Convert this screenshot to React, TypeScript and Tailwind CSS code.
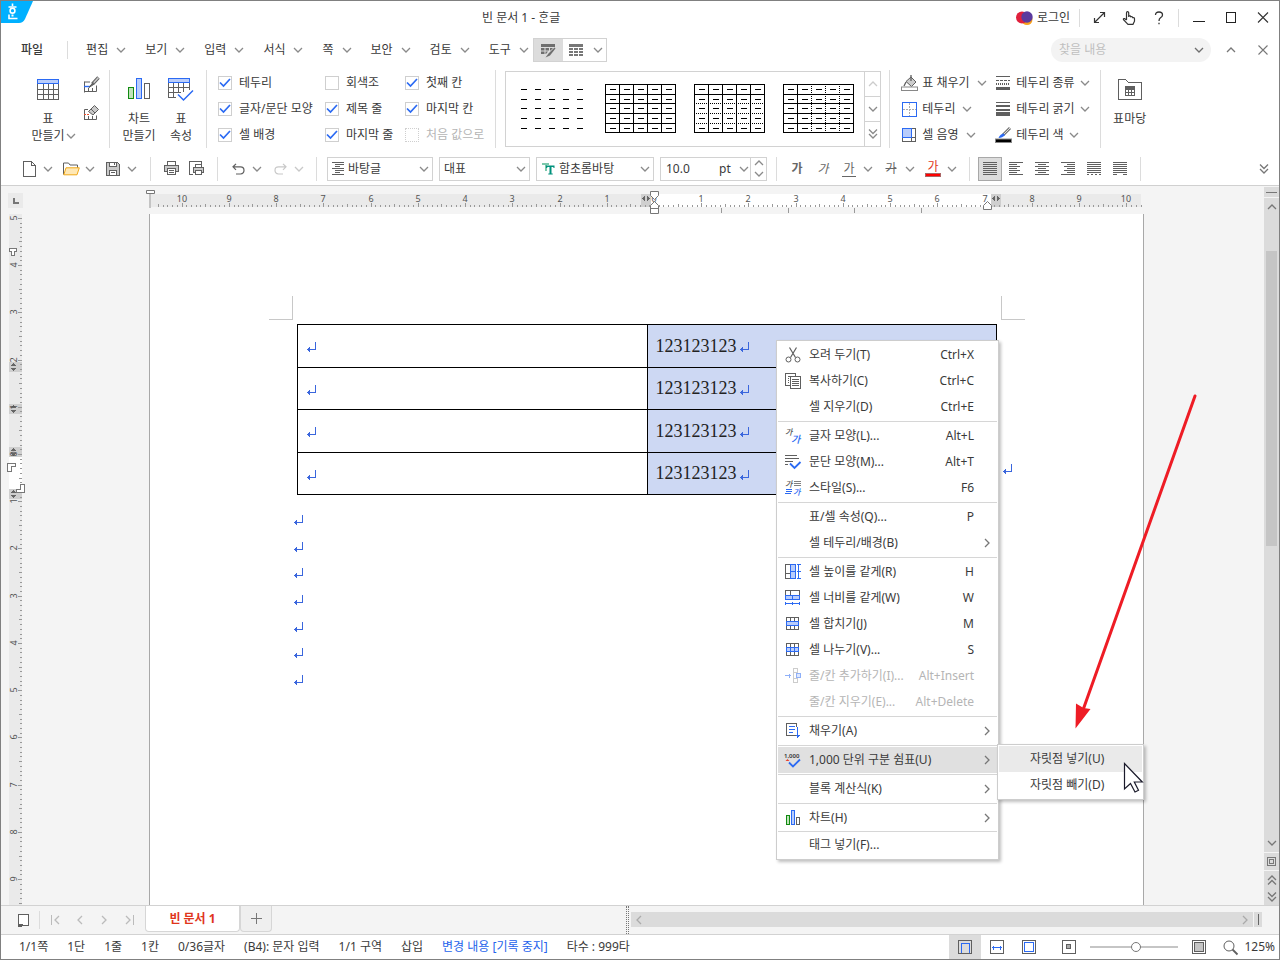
import React from 'react';
import type { ReactNode } from 'react';

const G = '#5f5f5f';
const B = '#2b6af3';
const LB = '#b9cdfb';

type SvgProps = { w: number; h: number; children: ReactNode; soft?: boolean };

function Svg({ w, h, children, soft }: SvgProps) {
  return (
    <svg width={w} height={h} viewBox={`0 0 ${w} ${h}`} fill="none" stroke={G} shapeRendering={soft ? 'auto' : 'crispEdges'} className="shrink-0 overflow-visible" aria-hidden="true">
      {children}
    </svg>
  );
}

type Dir = 'down' | 'up' | 'left' | 'right';
const chevPaths: Record<Dir, string> = {
  down: 'M1 3l4 4 4-4',
  up: 'M1 7l4-4 4 4',
  left: 'M7 1L3 5l4 4',
  right: 'M3 1l4 4-4 4',
};

function Chev({ dir = 'down', color = '#8a8a8a', size = 10 }: { dir?: Dir; color?: string; size?: number }) {
  return (
    <svg width={size} height={size} viewBox="0 0 10 10" fill="none" stroke={color} strokeWidth={1.3} className="shrink-0" aria-hidden="true">
      <path d={chevPaths[dir]} />
    </svg>
  );
}

function DoubleChev({ up = false, color = '#777' }: { up?: boolean; color?: string }) {
  return (
    <Svg w={10} h={12} soft>
      <path d={up ? 'M1 6l4-4 4 4M1 10.5l4-4 4 4' : 'M1 1.5l4 4 4-4M1 6l4 4 4-4'} stroke={color} strokeWidth={1.3} />
    </Svg>
  );
}

function Divider({ className = 'h-6' }: { className?: string }) {
  return <div className={`w-px shrink-0 bg-[#dcdcdc] ${className}`} />;
}

/* ---------- title bar ---------- */

function TitleBar() {
  return (
    <header className="flex h-[33px] shrink-0 items-center">
      <svg width="32" height="32" viewBox="0 0 32 32" className="shrink-0 self-start" aria-label="한글">
        <path d="M0 0h32l-8 18q-2 4-6 4H0z" fill="#00b0ff" />
        <g stroke="#fff" fill="none" strokeWidth="1.600">
          <path d="M11.500 2.500v2.500M7.500 6h8M8 13.500v4h8.500" />
          <circle cx="11.500" cy="9.700" r="2.400" />
          <path d="M11.500 13.500v2" strokeWidth="2" />
        </g>
      </svg>
      <h1 className="flex-1 pl-[449px] text-xs">빈 문서 1 - ᄒᆞᆫ글</h1>
      <button className="flex items-center gap-1 pr-[9px]">
        <svg width="17" height="14" viewBox="0 0 17 14" aria-hidden="true">
          <circle cx="11" cy="8.500" r="5.500" fill="#f9a11b" />
          <circle cx="6" cy="6.500" r="6" fill="#e0203c" />
          <circle cx="11" cy="6" r="5.700" fill="#5b3a9e" />
        </svg>
        로그인
      </button>
      <Divider className="h-[18px]" />
      <div className="flex items-center pl-1">
        <button aria-label="전체 화면" className="flex w-[30px] justify-center">
          <Svg w={13} h={13} soft>
            <path d="M2 11L11 2M7 1.500h4.500V6M1.500 7v4.500H6" stroke="#333" strokeWidth={1.200} />
          </Svg>
        </button>
        <button aria-label="터치 모드" className="flex w-[30px] justify-center">
          <Svg w={14} h={14} soft>
            <path d="M4.500 9V2q0-1.300 1.100-1.300T6.700 2v4M6.700 6V5q1.800-.6 2 .8 1.800-.6 2 .8 1.800-.2 1.800 1.200v2.400L11 13.300H6L1.500 8.700Q1 7.300 2.500 7.500l2 1.500" stroke="#333" strokeWidth={1.200} />
          </Svg>
        </button>
        <button aria-label="도움말" className="flex w-[30px] justify-center">
          <Svg w={10} h={14} soft>
            <path d="M1.500 4Q1.500 1 5 1t3.500 3Q8.500 5.500 6.500 6.800 5 7.800 5 10M5 11.800v1.500" stroke="#333" strokeWidth={1.300} />
          </Svg>
        </button>
      </div>
      <div className="w-1" />
      <Divider className="h-[18px]" />
      <div className="flex items-center pl-1">
        <button aria-label="최소화" className="flex w-8 justify-center">
          <Svg w={12} h={12}><path d="M0 9.500h12" stroke="#222" /></Svg>
        </button>
        <button aria-label="최대화" className="flex w-8 justify-center">
          <Svg w={12} h={12}><rect x="1" y=".5" width="9.500" height="9.500" stroke="#222" /></Svg>
        </button>
        <button aria-label="닫기" className="flex w-8 justify-center">
          <Svg w={12} h={12} soft><path d="M1 0.500l10 10M11 .5L1 10.500" stroke="#333" strokeWidth={1.100} /></Svg>
        </button>
      </div>
    </header>
  );
}

/* ---------- menu bar ---------- */

const menus = ['편집', '보기', '입력', '서식', '쪽', '보안', '검토', '도구'];

function MenuBar() {
  return (
    <nav className="flex h-8 shrink-0 items-center">
      <button className="pl-5 font-medium">파일</button>
      <div className="w-6" />
      <Divider className="h-[18px]" />
      <div className="flex gap-[19px] pr-1 pl-[18px]">
        {menus.map((m) => (
          <button key={m} className="flex items-center gap-2">
            {m}
            <Chev />
          </button>
        ))}
      </div>
      <div className="flex h-6 border border-[#d2d2d2]">
        <button aria-label="표 디자인" className="flex w-[29px] items-center justify-center bg-[#dcdcdc]">
          <Svg w={16} h={15} soft>
            <g fill="#6e6e6e" stroke="none">
              <path d="M1 1h14v3H1zM1 5h3.500v2.500H1zM5.500 5H9v2.500H5.500zM10 5h3l-2.500 2.500H10zM1 8.500h3.500V11H1zM5.500 8.500H8L6 11h-.5z" />
              <path d="M14.500 4.500L8.500 10.500l-3 4 4.500-2 5.500-7z" />
            </g>
          </Svg>
        </button>
        <button aria-label="표 레이아웃" className="flex w-[43px] items-center justify-between pr-[3px] pl-[6px]">
          <Svg w={14} h={13}>
            <path d="M0 0h14v3H0zM0 4h4v2H0zM5 4h4v2H5zM10 4h4v2h-4zM0 7h4v2H0zM5 7h4v2H5zM10 7h4v2h-4zM0 10h4v2H0zM5 10h4v2H5zM10 10h4v2h-4z" fill="#777" stroke="none" />
          </Svg>
          <Chev />
        </button>
      </div>
      <div className="flex-1" />
      <label className="flex h-6 w-40 items-center rounded-full bg-[#f3f3f3] pr-[7px] pl-2">
        <input aria-label="찾을 내용" placeholder="찾을 내용" className="min-w-0 flex-1 bg-transparent outline-none placeholder:text-[#bfbfbf]" />
        <Chev color="#6e6e6e" />
      </label>
      <div className="w-1" />
      <button aria-label="접기" className="flex w-8 justify-center"><Chev dir="up" color="#777" /></button>
      <button aria-label="문서 닫기" className="flex w-8 justify-center">
        <Svg w={10} h={10} soft><path d="M.5.500l9 9M9.500.500l-9 9" stroke="#777" strokeWidth={1.100} /></Svg>
      </button>
    </nav>
  );
}

/* ---------- ribbon ---------- */

const checks: { label: string; on: boolean; off?: boolean }[] = [
  { label: '테두리', on: true },
  { label: '회색조', on: false },
  { label: '첫째 칸', on: true },
  { label: '글자/문단 모양', on: true },
  { label: '제목 줄', on: true },
  { label: '마지막 칸', on: true },
  { label: '셀 배경', on: true },
  { label: '마지막 줄', on: true },
  { label: '처음 값으로', on: false, off: true },
];

function Check({ label, on, off }: { label: string; on: boolean; off?: boolean }) {
  return (
    <label className={`flex items-center gap-[7px] ${off ? 'text-[#b5b5b5]' : ''}`}>
      <span className="grid size-[14px] shrink-0 place-items-center">
        <input
          type="checkbox"
          defaultChecked={on}
          disabled={off}
          className="peer col-start-1 row-start-1 size-[14px] appearance-none border border-[#cfcfcf] bg-white disabled:border-dotted"
        />
        <svg width="12" height="12" viewBox="0 0 12 12" fill="none" stroke={B} strokeWidth="1.700" className="pointer-events-none invisible col-start-1 row-start-1 peer-checked:visible" aria-hidden="true">
          <path d="M1 5.500l3.500 3.500L11 2" />
        </svg>
      </span>
      {label}
    </label>
  );
}

const gx = [0, 14, 28, 42, 56, 70];
const gy = [0, 10, 19, 29, 39, 48];

function Thumb({ kind }: { kind: 'none' | 'full' | 'rows' | 'cols' }) {
  return (
    <svg width="71" height="50" viewBox="0 0 71 50" stroke="#000" shapeRendering="crispEdges" aria-hidden="true">
      {gy.slice(0, 5).map((y) =>
        gx.slice(0, 5).map((x) => <path key={`${x}-${y}`} d={`M${x + 5} ${y + 5.5}h6`} />),
      )}
      {kind !== 'none' && (
        <>
          {gx.map((x, i) => (
            <path key={x} d={`M${x + 0.5} 0V49`} strokeDasharray={kind === 'cols' && i > 1 && i < 5 ? '1 1' : undefined} />
          ))}
          {gy.map((y, i) => (
            <path key={y} d={`M0 ${y + 0.5}H70`} strokeDasharray={kind === 'rows' && i > 1 && i < 5 ? '1 1' : undefined} />
          ))}
        </>
      )}
    </svg>
  );
}

function Tool({ icon, label, w }: { icon: ReactNode; label: string; w?: boolean }) {
  return (
    <button className="flex items-center gap-[5px]">
      <span className="flex w-4 justify-center">{icon}</span>
      {label}
      <span className={w ? 'pl-0.5' : ''}><Chev /></span>
    </button>
  );
}

const brush = (
  <>
    <path d="M15 1L8 8" stroke="#777" strokeWidth={3} />
    <path d="M15 1L9 7" stroke="#ddd" strokeWidth={1} />
    <path d="M8.500 6.500Q5 7 3.500 11q4 0 6.500-3z" fill={B} stroke="none" />
  </>
);

const bigLabel = 'mt-[10px] text-center leading-[17px]';

function Ribbon() {
  return (
    <section className="flex h-[86px] shrink-0 pt-1 pb-1">
      <div className="flex pl-[30px]">
        <button className="flex w-[34px] flex-col items-center whitespace-nowrap pt-[9px]">
          <Svg w={22} h={21}>
            <path d="M.5 5v15.500h21V5M.5 10.500h21M.5 15.500h21M6.500 5v15M11.500 5v15M16.500 5v15" />
            <rect x=".5" y=".5" width="21" height="4" fill={LB} stroke={B} />
          </Svg>
          <span className={bigLabel}>표<br />만들기</span>
        </button>
        <div className="flex items-end pb-[7px] pl-px"><Chev /></div>
        <div className="flex flex-col justify-start gap-[11px] pt-[6px] pr-[9px] pl-[7px]">
          <button aria-label="표 그리기">
            <Svg w={17} h={17} soft>
              <path d="M1.500 5.500v11M1.500 15.500h12v-6M1.500 6H7M5.500 12v3M9.500 12v3" />
              <path d="M1 10.500h6" stroke={B} strokeWidth={1.400} />
              <path d="M15.500 1.500L9.500 8" stroke={G} strokeWidth={3.400} />
              <path d="M15.500 1.500L9.500 8" stroke="#ccc" strokeWidth={1.500} />
              <path d="M10 6.500L6 11.500l4.500-3z" fill={G} />
            </Svg>
          </button>
          <button aria-label="표 지우개">
            <Svg w={17} h={17} soft>
              <path d="M1.500 5.500v10.500M1.500 15.500h12v-4M1.500 5.500H5M5.500 12v3M9.500 12v3" />
              <path d="M1 10.500h5" stroke="#e8502f" strokeDasharray="2 1" />
              <path d="M11.500 1.500l4 4-5.500 5.500-4.500-3.500z" fill="#c9c9c9" />
              <path d="M8 5l4 4" />
            </Svg>
          </button>
        </div>
      </div>
      <Divider className="h-[78px]" />
      <div className="flex gap-2 pr-2 pl-3">
        <button className="flex w-[34px] flex-col items-center whitespace-nowrap pt-2">
          <Svg w={22} h={22}>
            <rect x=".5" y="9.500" width="5" height="11" fill="#bfe3b9" stroke="#118a11" />
            <rect x="8.500" y=".5" width="5" height="20" fill={LB} stroke={B} />
            <rect x="16.500" y="5.500" width="5" height="15" />
          </Svg>
          <span className={bigLabel}>차트<br />만들기</span>
        </button>
        <button className="flex w-[34px] flex-col items-center whitespace-nowrap pt-2">
          <svg width="26" height="24" viewBox="0 0 26 24" fill="none" stroke={G} aria-hidden="true" className="-mb-0.5">
            <g shapeRendering="crispEdges">
              <path d="M.5 5v14.500H8M.5 9.500h21M.5 14.500h12M5.500 5v14M10.500 5v10M15.500 5v9M21.500 5v7" />
              <rect x=".5" y=".5" width="21" height="4" fill={LB} stroke={B} />
            </g>
            <path d="M10 16.500l5.500 5.500L25 12.500" stroke={B} strokeWidth="1.500" />
          </svg>
          <span className={bigLabel}>표<br />속성</span>
        </button>
      </div>
      <Divider className="h-[78px]" />
      <div className="grid grid-cols-[107px_80px_auto] grid-rows-[26px_26px_26px] px-[11px] whitespace-nowrap">
        {checks.map((c) => (
          <Check key={c.label} {...c} />
        ))}
      </div>
      <Divider className="h-[78px]" />
      <div className="mt-px mr-2 ml-[9px] flex h-[76px] border border-[#d2d2d2]">
        <div className="flex items-center gap-[18px] px-[10px]">
          <Thumb kind="none" />
          <Thumb kind="full" />
          <Thumb kind="rows" />
          <Thumb kind="cols" />
        </div>
        <div className="flex w-4 flex-col divide-y divide-[#d2d2d2] border-l border-[#d2d2d2]">
          <button aria-label="위로" className="flex flex-1 items-center justify-center"><Chev dir="up" color="#ccc" /></button>
          <button aria-label="아래로" className="flex flex-1 items-center justify-center"><Chev /></button>
          <button aria-label="자세히" className="flex flex-1 items-center justify-center"><DoubleChev color="#8a8a8a" /></button>
        </div>
      </div>
      <Divider className="h-[78px]" />
      <div className="grid grid-cols-[94px_auto] grid-rows-[26px_26px_26px] pr-[10px] pl-[11px] whitespace-nowrap">
        <Tool w label="표 채우기" icon={
          <Svg w={17} h={16} soft>
            <path d="M5 6.500L10 2l5 5-4.500 4.500z" fill="#ccc" />
            <path d="M10 0v6M5 7L3 11" strokeWidth={1.300} />
            <rect x=".5" y="12" width="16" height="3.500" fill="#fff" stroke="#888" />
          </Svg>
        } />
        <Tool label="테두리 종류" icon={
          <Svg w={14} h={14}>
            <path d="M0 .5h14" /><path d="M0 4.500h14" strokeDasharray="3 1" /><path d="M0 8h14" strokeWidth={2} strokeDasharray="1 1" /><path d="M0 12.500h14" strokeWidth={3} />
          </Svg>
        } />
        <Tool w label="테두리" icon={
          <Svg w={15} h={15}>
            <path d="M7.500 1v13M1 7.500h13" stroke="#aaa" strokeDasharray="2 1" />
            <rect x=".5" y=".5" width="14" height="14" stroke={B} />
          </Svg>
        } />
        <Tool label="테두리 굵기" icon={
          <Svg w={14} h={14}>
            <path d="M0 .5h14" /><path d="M0 4h14" strokeWidth={2} /><path d="M0 8h14" strokeWidth={2} /><path d="M0 12h14" strokeWidth={4} />
          </Svg>
        } />
        <Tool w label="셀 음영" icon={
          <Svg w={14} h={14}>
            <rect x=".5" y=".5" width="13" height="13" /><path d="M9.500 9v5M9 9.500h5" />
            <rect x=".5" y=".5" width="9" height="9" fill={LB} stroke={B} />
          </Svg>
        } />
        <Tool label="테두리 색" icon={
          <Svg w={17} h={16} soft>
            {brush}
            <rect x=".5" y="12" width="16" height="3.500" fill="#000" stroke="#888" />
          </Svg>
        } />
      </div>
      <Divider className="h-[78px]" />
      <button className="flex w-[58px] flex-col items-center pt-[9px]">
        <Svg w={24} h={21}>
          <path d="M.5 20.500V.5h7l3 3h13v17z" />
          <path d="M7.500 7.500h9v9h-9zM7.500 10.500h9M7.500 13.500h9M10.500 10v6M13.500 10v6" /><path d="M7 8.500h10" strokeWidth={2} />
        </Svg>
        <span className={bigLabel}>표마당</span>
      </button>
    </section>
  );
}

/* ---------- format bar ---------- */

function Pair({ label, children, faded }: { label: string; children: ReactNode; faded?: boolean }) {
  return (
    <div className="flex items-center">
      <button aria-label={label} className="flex w-[22px] items-center justify-center">{children}</button>
      <button aria-label={`${label} 옵션`} className="flex w-4 justify-center"><Chev color={faded ? '#c8c8c8' : undefined} /></button>
    </div>
  );
}

function Combo({ label, value, className, icon }: { label: string; value: string; className: string; icon?: ReactNode }) {
  return (
    <label className={`flex h-6 shrink-0 items-center gap-[3px] border border-[#d2d2d2] pr-[3px] pl-1 ${className}`}>
      {icon}
      <select aria-label={label} className="min-w-0 flex-1 appearance-none bg-transparent outline-none">
        <option>{value}</option>
      </select>
      <Chev />
    </label>
  );
}

type AlignKind = 'justify' | 'left' | 'center' | 'right' | 'spread' | 'divide';
const aligns: { kind: AlignKind; label: string }[] = [
  { kind: 'justify', label: '양쪽 정렬' },
  { kind: 'left', label: '왼쪽 정렬' },
  { kind: 'center', label: '가운데 정렬' },
  { kind: 'right', label: '오른쪽 정렬' },
  { kind: 'spread', label: '배분 정렬' },
  { kind: 'divide', label: '나눔 정렬' },
];

function AlignIcon({ kind }: { kind: AlignKind }) {
  const rows = [0, 1, 2, 3, 4, 5, 6];
  return (
    <Svg w={14} h={13}>
      {rows.map((r) => {
        const y = r * 2 + 0.5;
        const even = r % 2 === 0;
        let d = `M0 ${y}h14`;
        if (kind === 'left') d = `M0 ${y}h${even ? (r === 2 || r === 4 ? 11 : 14) : 8}`;
        if (kind === 'center') d = even ? `M0 ${y}h14` : `M3 ${y}h8`;
        if (kind === 'right') d = even ? (r === 2 || r === 4 ? `M3 ${y}h11` : `M0 ${y}h14`) : `M6 ${y}h8`;
        if (kind === 'spread' && r === 6) d = `M0 ${y}h2M4 ${y}h2M8 ${y}h2M12 ${y}h2`;
        if (kind === 'divide' && r === 6) d = `M0 ${y}h4M10 ${y}h4`;
        return <path key={r} d={d} />;
      })}
    </Svg>
  );
}

function FormatBar() {
  return (
    <section className="flex h-[33px] shrink-0 items-center">
      <div className="flex gap-1 pr-[10px] pl-[17px]">
        <Pair label="새 문서">
          <Svg w={13} h={16}><path d="M.5.500h8l4 4v11H.5zM8.500.500v4h4" /></Svg>
        </Pair>
        <Pair label="열기">
          <Svg w={17} h={14} soft>
            <path d="M.5 12.500V1h5l1.500 2h7.500v3" />
            <path d="M3 5.800h13.300L14 12.800H.8z" fill="#ffe8b5" stroke="#f0a818" />
          </Svg>
        </Pair>
        <Pair label="저장">
          <Svg w={14} h={14}>
            <path d="M.5.500h11l2 2v11H.5z" fill="#c9c9c9" />
            <path d="M3.500.500h7v4h-7zM3.500 8.500h7v5h-7z" fill="#fff" />
            <path d="M5 10.500h4M8.500 1v2" />
          </Svg>
        </Pair>
      </div>
      <Divider />
      <div className="flex px-[7px]">
        <button aria-label="인쇄" className="flex w-[26px] justify-center">
          <Svg w={15} h={14}>
            <path d="M3.500 4V.5h8V4" /><path d="M.5 4.500h14v6H.5z" fill="#c9c9c9" /><path d="M3.500 7.500h8v6h-8z" fill="#fff" /><path d="M5 9.500h5M5 11.500h5" />
          </Svg>
        </button>
        <button aria-label="미리 보기" className="flex w-[26px] justify-center">
          <Svg w={16} h={15}>
            <path d="M4 13.500H.5V.500h12V3" /><path d="M6.500 6.500v-3h6v3" /><path d="M4.500 6.500h10v5h-10z" fill="#c9c9c9" /><path d="M6.500 9.500h6v4h-6z" fill="#fff" />
          </Svg>
        </button>
      </div>
      <Divider />
      <div className="flex gap-1 px-[9px]">
        <Pair label="되돌리기">
          <Svg w={13} h={12} soft><path d="M4 .8L1 3.800l3 3M1 3.800h7.500q3.500 0 3.500 3.500T8.500 11H4" strokeWidth={1.200} /></Svg>
        </Pair>
        <Pair label="다시 실행" faded>
          <Svg w={13} h={12} soft><path d="M9 .8l3 3-3 3M12 3.800H4.500Q1 3.800 1 7.300T4.500 11H9" stroke="#c8c8c8" strokeWidth={1.200} /></Svg>
        </Pair>
      </div>
      <Divider />
      <div className="flex gap-[6px] pr-[9px] pl-[10px]">
        <Combo label="스타일" value="바탕글" className="w-[106px]" icon={
          <Svg w={13} h={13}><path d="M0 .5h12M3 2.500h9M3 4.500h5M0 6.500h12M3 8.500h9M3 10.500h5M0 12.500h12" /></Svg>
        } />
        <Combo label="언어" value="대표" className="w-[91px]" />
        <Combo label="글꼴" value="함초롬바탕" className="w-[118px]" icon={
          <svg width="15" height="14" viewBox="0 0 15 14" aria-hidden="true" className="shrink-0">
            <path d="M1 1h7v2H6v6H4V3H1z" fill="#7cc8ac" />
            <path d="M5 3.500h8.500V6h-.8l-.6-1H10.500v6.500h1.200v1H7.300v-1h1.200V5H6.600L6 6H5z" fill="#00917c" />
          </svg>
        } />
        <div className="flex h-6 w-[107px] items-center border border-[#d2d2d2] pl-[5px]">
          <input aria-label="글자 크기" defaultValue="10.0" className="w-[53px] min-w-0 bg-transparent outline-none" />
          <select aria-label="단위" className="w-[18px] appearance-none bg-transparent outline-none"><option>pt</option></select>
          <span className="flex flex-1 justify-center"><Chev /></span>
          <div className="flex h-full w-4 flex-col items-center justify-between border-l border-[#d2d2d2] pb-px">
            <button aria-label="크게"><Chev dir="up" /></button>
            <button aria-label="작게"><Chev /></button>
          </div>
        </div>
      </div>
      <Divider />
      <div className="flex items-center pr-[9px] pl-[7px]">
        <button className="w-[26px] font-bold text-[#666]">가</button>
        <button className="w-[26px] text-[#666] italic">가</button>
        <div className="flex items-center gap-1 pl-0.5">
          <Pair label="밑줄"><span className="border-b border-[#666] px-px leading-[15px] text-[#666]">가</span></Pair>
          <Pair label="취소선"><span className="text-[#666] line-through">가</span></Pair>
          <Pair label="글자 색">
            <span className="flex flex-col items-center text-[#e0351c]">
              <span className="leading-3">가</span>
              <span className="h-1 w-4 border border-[#a66] bg-[#ff0000]" />
            </span>
          </Pair>
        </div>
      </div>
      <Divider />
      <div className="flex gap-0.5 px-2">
        {aligns.map(({ kind, label }, i) => (
          <button key={kind} aria-label={label} className={`flex size-6 items-center justify-center ${i === 0 ? 'border border-[#a8a8a8] bg-[#dcdcdc]' : ''}`}>
            <AlignIcon kind={kind} />
          </button>
        ))}
      </div>
      <Divider />
      <div className="flex-1" />
      <button aria-label="도구 더 보기" className="pr-[10px]"><DoubleChev /></button>
    </section>
  );
}

/* ---------- rulers ---------- */

const UNIT = 4.724;

function HorizontalRuler() {
  const ticks = Array.from({ length: 209 }, (_, k) => k - 105);
  return (
    <svg className="block h-7 w-full shrink-0" aria-hidden="true" shapeRendering="crispEdges">
      <g transform="translate(-23 -186)">
        <rect x="150" y="194" width="991" height="13" fill="#eaeaea" />
        <rect x="650" y="194" width="341" height="13" fill="#fff" />
        <rect x="641" y="194" width="10" height="13" fill="#cfcfcf" />
        <rect x="991" y="194" width="10" height="13" fill="#cfcfcf" />
        <rect x="149" y="194" width="2" height="14" fill="#c4c4c4" />
        {ticks.map((i) => {
          const x = Math.round(654 + i * UNIT);
          const len = i % 10 === 0 ? 4 : i % 5 === 0 ? 3 : 2;
          return <rect key={i} x={x} y={207 - len} width="1" height={len} fill="#999" />;
        })}
        {[721, 788, 854, 921].map((x) => (
          <rect key={x} x={x} y="208" width="1" height="5" fill="#999" />
        ))}
        <g fontSize="9" fill="#555" textAnchor="middle">
          {Array.from({ length: 21 }, (_, k) => k - 10).map((n) => (
            <text key={n} x={Math.round(654 + n * UNIT * 10)} y="202">{Math.abs(n)}</text>
          ))}
        </g>
        <path d="M645 196v5l-3-2.500zM647 196v5l3-2.500zM995 196v5l-3-2.500zM997 196v5l3-2.500z" fill="#666" />
        <g fill="#fff" stroke="#777" shapeRendering="auto">
          <path d="M146.500 190.500h8v3h-8zM650.500 191.500h8v4l-4 4-4-4zM650.500 213.500v-8l4-4 4 4v8zM650.500 208.500h8M983.500 209.500v-4l4-4 4 4v4z" />
        </g>
      </g>
    </svg>
  );
}

function VerticalRuler() {
  const ticks = Array.from({ length: 146 }, (_, k) => k - 50);
  return (
    <svg className="block min-h-0 w-6 flex-1" aria-hidden="true" shapeRendering="crispEdges">
      <g transform="translate(-1 -186)">
        <rect x="8" y="193" width="15" height="15" fill="#eaeaea" />
        <path d="M13.500 198v5h5" stroke="#777" strokeWidth="2" fill="none" />
        <rect x="9" y="214" width="13" height="691" fill="#eaeaea" />
        <rect x="9" y="457" width="13" height="33" fill="#fff" />
        {[362, 404, 447, 489].map((y) => (
          <g key={y}>
            <rect x="9" y={y} width="13" height="10" fill="#cfcfcf" />
            <path d={`M10.500 ${y + 4}h6l-3-3zM10.500 ${y + 6}h6l-3 3z`} fill="#666" />
          </g>
        ))}
        {ticks.map((i) => {
          const y = Math.round(454 + i * UNIT);
          const len = i % 10 === 0 ? 4 : i % 5 === 0 ? 3 : 2;
          return <rect key={i} x={22 - len} y={y} width={len} height="1" fill="#999" />;
        })}
        <g fontSize="9" fill="#555" textAnchor="middle">
          {Array.from({ length: 15 }, (_, k) => k - 5).map((n) => (
            <text key={n} transform={`translate(17 ${Math.round(454 + n * UNIT * 10)}) rotate(-90)`}>{Math.abs(n)}</text>
          ))}
        </g>
        <g fill="#fff" stroke="#777">
          <path d="M9.500 248.500h7v3h-2v4h-3v-4h-2zM7.500 463.500h8v3h-4v5h-4zM24.500 484.500v8h-8v-3h4v-5z" />
        </g>
      </g>
    </svg>
  );
}

/* ---------- document ---------- */

function ParaMark() {
  return (
    <svg width="10" height="11" viewBox="0 0 10 11" fill="#3a66dd" shapeRendering="crispEdges" className="inline-block shrink-0" aria-hidden="true">
      <path d="M8 0h1v8H0V7h1V6h1V5h1v2h5zM1 8h2v2H2V9H1z" />
    </svg>
  );
}

function Doc() {
  return (
    <article className="relative min-h-[691px] w-[995px] flex-1 border-x border-[#a8a8a8] bg-white">
      <div className="flex justify-between pt-[82px] pr-[118px] pl-[119px]">
        <div className="size-6 border-r border-b border-[#c8c8c8]" />
        <div className="size-6 border-b border-l border-[#c8c8c8]" />
      </div>
      <div className="flex items-end pt-1 pl-[147px]">
        <table className="h-[171px] w-[700px] table-fixed border-collapse">
          <tbody>
            {[0, 1, 2, 3].map((r) => (
              <tr key={r}>
                <td className="border border-black px-[9px] align-middle"><span className="flex pt-1"><ParaMark /></span></td>
                <td className="border border-black bg-[#cdd8f3] px-2 align-middle">
                  <span className="flex items-center gap-[3px] font-[Liberation_Serif,serif] text-lg leading-6 text-[#222]">
                    123123123
                    <span className="flex pt-1"><ParaMark /></span>
                  </span>
                </td>
              </tr>
            ))}
          </tbody>
        </table>
        <div className="pb-[18px] pl-[6px]"><ParaMark /></div>
      </div>
      <div className="mt-3 flex h-[187px] flex-col pl-36">
        {[0, 1, 2, 3, 4, 5, 6].map((p) => (
          <p key={p} className="flex flex-1 items-center"><ParaMark /></p>
        ))}
      </div>
      <ContextMenu />
      <SubMenu />
      <svg className="pointer-events-none absolute top-[176px] left-[915px]" width="140" height="345" viewBox="0 0 140 345" aria-hidden="true">
        <path d="M130 6L18 320" stroke="#ee1c25" strokeWidth="3" strokeLinecap="round" />
        <path d="M10.500 338.500L11 313.500l7.500 4.500 7 1z" fill="#ee1c25" />
      </svg>
      <svg className="pointer-events-none absolute top-[548px] left-[973px]" width="21" height="32" viewBox="0 0 21 32" aria-hidden="true">
        <path d="M1.500 1.500v25.500l6-5.500 4.500 8.500 3.500-1.800-4.200-8.200h8z" fill="#fff" stroke="#1a1a2a" strokeWidth="1.200" />
      </svg>
    </article>
  );
}

/* ---------- context menu ---------- */

type Item = { label: string; key?: string; sub?: boolean; off?: boolean; hot?: boolean; icon?: ReactNode };

const ga = (x: number, y: number, color: string, size: number) => (
  <text x={x} y={y} fontSize={size} fill={color} stroke="none" fontStyle="italic" fontWeight="500">가</text>
);

const groups: Item[][] = [
  [
    { label: '오려 두기(T)', key: 'Ctrl+X', icon: <Svg w={16} h={16} soft><path d="M4.500.500l6 10M11.500.500l-6 10" strokeWidth={1.200} /><circle cx="3.500" cy="12.500" r="2.500" /><circle cx="12.500" cy="12.500" r="2.500" /></Svg> },
    { label: '복사하기(C)', key: 'Ctrl+C', icon: <Svg w={16} h={16}><path d="M5 12.500H.5V.500h10V3M3 3.500h2M3 5.500h1M3 7.500h1M3 9.500h1" /><path d="M5.500 3.500h10v12h-10z" fill="#fff" /><path d="M7 6.500h7M7 8.500h7M7 10.500h7M7 12.500h7" /></Svg> },
    { label: '셀 지우기(D)', key: 'Ctrl+E' },
  ],
  [
    { label: '글자 모양(L)...', key: 'Alt+L', icon: <Svg w={16} h={16} soft>{ga(0, 7, '#555', 8)}{ga(6, 15, B, 10)}</Svg> },
    { label: '문단 모양(M)...', key: 'Alt+T', icon: <Svg w={16} h={16} soft><path d="M0 1.500h12M0 4.500h14M0 7.500h8M0 10.500h3" /><path d="M5 9.500l4.500 4.500L15.500 8" stroke={B} strokeWidth={1.800} /></Svg> },
    { label: '스타일(S)...', key: 'F6', icon: <Svg w={16} h={16} soft>{ga(0, 7, '#555', 8)}<path d="M9 1.500h7M9 3.500h7M9 5.500h7" strokeWidth={0.8} />{ga(8, 15, B, 8)}<path d="M1 9.500h6M1 11.500h6M0 13.500h6" stroke={B} /></Svg> },
  ],
  [
    { label: '표/셀 속성(Q)...', key: 'P' },
    { label: '셀 테두리/배경(B)', sub: true },
  ],
  [
    { label: '셀 높이를 같게(R)', key: 'H', icon: <Svg w={16} h={16}><path d="M.5.500h5v14h-5zM0 9.500h5" /><path d="M5.500.500h5v14h-5z" fill={LB} stroke={B} /><path d="M5 7.500h6M13.500 1v14M12 .5h4M12 7.500h4M12 14.500h4" stroke={B} /></Svg> },
    { label: '셀 너비를 같게(W)', key: 'W', icon: <Svg w={16} h={16}><path d="M.5.500h14v5H.5zM5.500.500v5" /><path d="M.5 5.500h14v4H.5zM7.500 5v5" fill={LB} stroke={B} /><path d="M0 13.500h15M.5 12v3M7.500 12v3M14.500 12v3" stroke={B} /></Svg> },
    { label: '셀 합치기(J)', key: 'M', icon: <Svg w={14} h={14}><path d="M.5.500h12v12H.5zM4.500 0v13M8.500 0v13" /><path d="M.5 4.500h12v4H.5z" fill={LB} stroke={B} /></Svg> },
    { label: '셀 나누기(V)...', key: 'S', icon: <Svg w={14} h={14}><path d="M.5.500h12v12H.5zM4.500 0v13M8.500 0v13" /><path d="M.5 4.500h12v4H.5z" fill={LB} stroke={B} /><path d="M4.500 4v5M8.500 4v5" stroke={B} /></Svg> },
    { label: '줄/칸 추가하기(I)...', key: 'Alt+Insert', off: true, icon: <Svg w={16} h={16}><path d="M0 7.500h6M4.500 5.500v4" stroke="#8fb0f8" /><path d="M8.500.500h4v4h-4zM8.500 10.500h4v4h-4zM8.500 5v5" stroke="#ccc" /><path d="M11.500 5.500h4v4h-4z" fill="#dfe8fd" stroke="#8fb0f8" /></Svg> },
    { label: '줄/칸 지우기(E)...', key: 'Alt+Delete', off: true },
  ],
  [{ label: '채우기(A)', sub: true, icon: <Svg w={14} h={16}><path d="M10.500 4V.500H.5v12h9" /><path d="M3 3.500h6M3 6.500h6M3 9.500h4M11.500 4v11M9.500 12.500h4M10.500 13.500h2" stroke={B} /></Svg> }],
  [{ label: '1,000 단위 구분 쉼표(U)', sub: true, hot: true, icon: <Svg w={17} h={17} soft><text x="0" y="6" fontSize="6" fontWeight="600" fill="#333" stroke="none">1,000</text><path d="M1.500 9l2-2 2 2z" fill="#e8402f" stroke="none" /><path d="M5 10.500l4 4 7-7" stroke={B} strokeWidth={1.800} /></Svg> }],
  [{ label: '블록 계산식(K)', sub: true }],
  [{ label: '차트(H)', sub: true, icon: <Svg w={14} h={16}><rect x=".5" y="5.500" width="3" height="9" fill="#bfe3b9" stroke="#118a11" /><rect x="5.500" y=".5" width="3" height="14" fill={LB} stroke={B} /><rect x="10.500" y="7.500" width="3" height="7" /></Svg> }],
  [{ label: '태그 넣기(F)...' }],
];

function MenuRow({ item }: { item: Item }) {
  return (
    <li>
      <button
        disabled={item.off}
        className={`flex h-[26px] w-full items-center text-left whitespace-nowrap ${item.off ? 'text-[#b5b5b5]' : ''} ${item.hot ? 'bg-[#e0e0e0]' : ''}`}
      >
        <span className="mr-0.5 flex w-[29px] shrink-0 justify-center">{item.icon}</span>
        <span className="flex-1">{item.label}</span>
        {item.key}
        <span className="flex w-[23px] justify-center pl-0.5">{item.sub && <Chev dir="right" color="#777" />}</span>
      </button>
    </li>
  );
}

function ContextMenu() {
  return (
    <div className="absolute top-[126px] left-[626px] w-[223px] border border-[#cdcdcd] bg-white p-px shadow-[2px_2px_3px_rgba(0,0,0,0.25)]">
      {groups.map((g, i) => (
        <React.Fragment key={g[0].label}>
          {i > 0 && <hr className={`border-[#d6d6d6] ${i === groups.length - 1 ? '' : 'my-px'}`} />}
          <ul>
            {g.map((item) => (
              <MenuRow key={item.label} item={item} />
            ))}
          </ul>
        </React.Fragment>
      ))}
    </div>
  );
}

function SubMenu() {
  return (
    <ul className="absolute top-[530px] left-[847px] w-[147px] border border-[#cdcdcd] bg-white p-px shadow-[2px_2px_3px_rgba(0,0,0,0.25)]">
      <li><button className="flex h-[26px] w-full items-center bg-[#eaeaea] pl-[31px]">자릿점 넣기(U)</button></li>
      <li><button className="flex h-[26px] w-full items-center pl-[31px]">자릿점 빼기(D)</button></li>
    </ul>
  );
}

function VerticalScroll() {
  return (
    <div className="flex w-[15px] shrink-0 flex-col gap-px pt-px">
      <button aria-label="화면 나누기" className="flex h-[10px] items-center justify-center bg-[#dbdbdb]"><span className="h-px w-[11px] bg-[#777]" /></button>
      <div className="flex min-h-0 flex-1 flex-col items-center bg-[#dbdbdb]">
        <button aria-label="위로 이동" className="flex h-[53px] pt-1"><Chev dir="up" color="#777" /></button>
        <div className="h-[295px] w-[11px] bg-[#c5c5c5]" />
        <div className="flex-1" />
        <button aria-label="아래로 이동" className="pb-1"><Chev color="#777" /></button>
      </div>
      <button aria-label="개체 선택" className="flex h-[17px] items-center justify-center bg-[#dbdbdb]">
        <Svg w={9} h={9}><path d="M.5.500h8v8h-8zM2.500 2.500h4v4h-4z" stroke="#777" /></Svg>
      </button>
      <div className="flex h-[34px] flex-col items-center justify-around bg-[#dbdbdb]">
        <button aria-label="이전 쪽"><DoubleChev up /></button>
        <button aria-label="다음 쪽"><DoubleChev /></button>
      </div>
    </div>
  );
}

/* ---------- bottom bars ---------- */

function TabStrip() {
  const nav: { label: string; dir: Dir; bar?: boolean }[] = [
    { label: '처음', dir: 'left', bar: true },
    { label: '이전', dir: 'left' },
    { label: '다음', dir: 'right' },
    { label: '끝', dir: 'right', bar: true },
  ];
  return (
    <section className="flex h-[30px] shrink-0 items-start border-y border-[#d2d2d2] bg-[#f4f4f4]">
      <button aria-label="문서 탭 목록" className="flex h-7 w-[38px] items-center justify-center pl-[7px]">
        <Svg w={11} h={13}><path d="M.5.500h10v11h-6l-4 0z" fill="#fff" /><path d="M0 10h5v1l-2 2H0z" fill={G} stroke="none" /></Svg>
      </button>
      <Divider className="mt-[5px] h-[18px]" />
      <div className="flex h-7 w-[105px] items-center pl-1">
        {nav.map((n) => (
          <button key={n.label} aria-label={n.label} className="flex w-6 items-center justify-center">
            {n.bar && n.dir === 'left' && <span className="h-[10px] w-px bg-[#bbb]" />}
            <Chev dir={n.dir} color="#bbb" />
            {n.bar && n.dir === 'right' && <span className="h-[10px] w-px bg-[#bbb]" />}
          </button>
        ))}
      </div>
      <button className="h-[26px] w-[95px] rounded-b border border-t-0 border-[#d6d6d6] bg-white font-bold text-[#e0351c]">빈 문서 1</button>
      <button aria-label="새 탭" className="flex h-[26px] w-8 items-center justify-center rounded-b border border-t-0 border-[#d6d6d6] bg-[#efefef]">
        <Svg w={11} h={11}><path d="M5.500 0v11M0 5.500h11" stroke="#777" /></Svg>
      </button>
      <div className="min-w-0 flex-[356]" />
      <div className="h-7 w-[3px] shrink-0 border-x border-dotted border-[#777]" />
      <div className="mt-[6px] ml-0.5 flex h-[15px] min-w-0 flex-[619] items-center justify-between bg-[#dbdbdb] px-[3px]">
        <Chev dir="left" color="#aaa" />
        <Chev dir="right" color="#aaa" />
      </div>
      <div className="mt-[6px] mr-[17px] ml-px flex h-[15px] w-2 items-center justify-center bg-[#dbdbdb]"><span className="h-[11px] w-px bg-[#666]" /></div>
    </section>
  );
}

const status = ['1/1쪽', '1단', '1줄', '1칸', '0/36글자', '(B4): 문자 입력', '1/1 구역', '삽입'];

function StatusBar() {
  return (
    <footer className="flex h-6 shrink-0 items-center whitespace-nowrap">
      <div className="flex gap-[19px] pl-[18px]">
        {status.map((s) => (
          <span key={s}>{s}</span>
        ))}
        <a href="#track" className="text-[#2563eb]">변경 내용 [기록 중지]</a>
        <span>타수 : 999타</span>
      </div>
      <div className="flex-1" />
      <button aria-label="쪽 윤곽" className="flex h-6 w-8 items-center justify-center bg-[#dcdcdc]">
        <Svg w={14} h={14}><path d="M.5.500h13v13H.5z" /><path d="M3.500 13V3.500h8V13" stroke={B} /></Svg>
      </button>
      <button aria-label="폭 맞춤" className="flex w-8 justify-center">
        <Svg w={14} h={14}><path d="M.5.500h13v13H.5z" /><path d="M2 7.500h10M3.500 5.500v4M10.500 5.500v4" stroke={B} /></Svg>
      </button>
      <button aria-label="쪽 맞춤" className="mr-[3px] flex w-8 justify-center">
        <Svg w={14} h={14}><path d="M.5.500h13v13H.5z" /><path d="M2.500 2.500h9v9h-9z" stroke={B} /></Svg>
      </button>
      <button aria-label="축소" className="flex w-[42px] justify-center">
        <Svg w={14} h={14}><path d="M.5.500h13v13H.5z" /><path d="M4.500 4.500h4v4h-4z" fill="#aaa" /></Svg>
      </button>
      <input
        type="range"
        aria-label="확대 비율"
        min={0}
        max={100}
        defaultValue={52}
        className="h-3 w-[88px] appearance-none bg-transparent [&::-webkit-slider-runnable-track]:h-0.5 [&::-webkit-slider-runnable-track]:bg-[#c5c5c5] [&::-webkit-slider-thumb]:-mt-1 [&::-webkit-slider-thumb]:size-[10px] [&::-webkit-slider-thumb]:appearance-none [&::-webkit-slider-thumb]:rounded-full [&::-webkit-slider-thumb]:border [&::-webkit-slider-thumb]:border-[#777] [&::-webkit-slider-thumb]:bg-white"
      />
      <button aria-label="확대" className="mr-[3px] flex w-[42px] justify-center">
        <Svg w={14} h={14}><path d="M.5.500h13v13H.5z" /><path d="M2.500 2.500h9v9h-9z" fill="#c5c5c5" /></Svg>
      </button>
      <button className="flex items-center gap-[6px] pr-1">
        <Svg w={15} h={15} soft><circle cx="6" cy="6" r="5" /><path d="M9.500 9.500l5 5" strokeWidth={1.800} /></Svg>
        125%
      </button>
    </footer>
  );
}

export default function App() {
  return (
    <div className="flex min-h-screen min-w-[1280px] flex-col border border-[#808080] bg-white font-['Noto_Sans','Noto_Sans_CJK_KR',sans-serif] text-xs text-[#3a3a3a]">
      <TitleBar />
      <MenuBar />
      <Ribbon />
      <FormatBar />
      <main className="flex flex-1 border-t border-[#d0d0d0] bg-[#f4f4f4]">
        <div className="z-10 flex w-[22px] shrink-0 flex-col"><VerticalRuler /></div>
        <div className="flex min-w-0 flex-1 flex-col">
          <HorizontalRuler />
          <div className="flex flex-1 flex-col pl-[126px]"><Doc /></div>
        </div>
        <VerticalScroll />
      </main>
      <TabStrip />
      <StatusBar />
    </div>
  );
}
